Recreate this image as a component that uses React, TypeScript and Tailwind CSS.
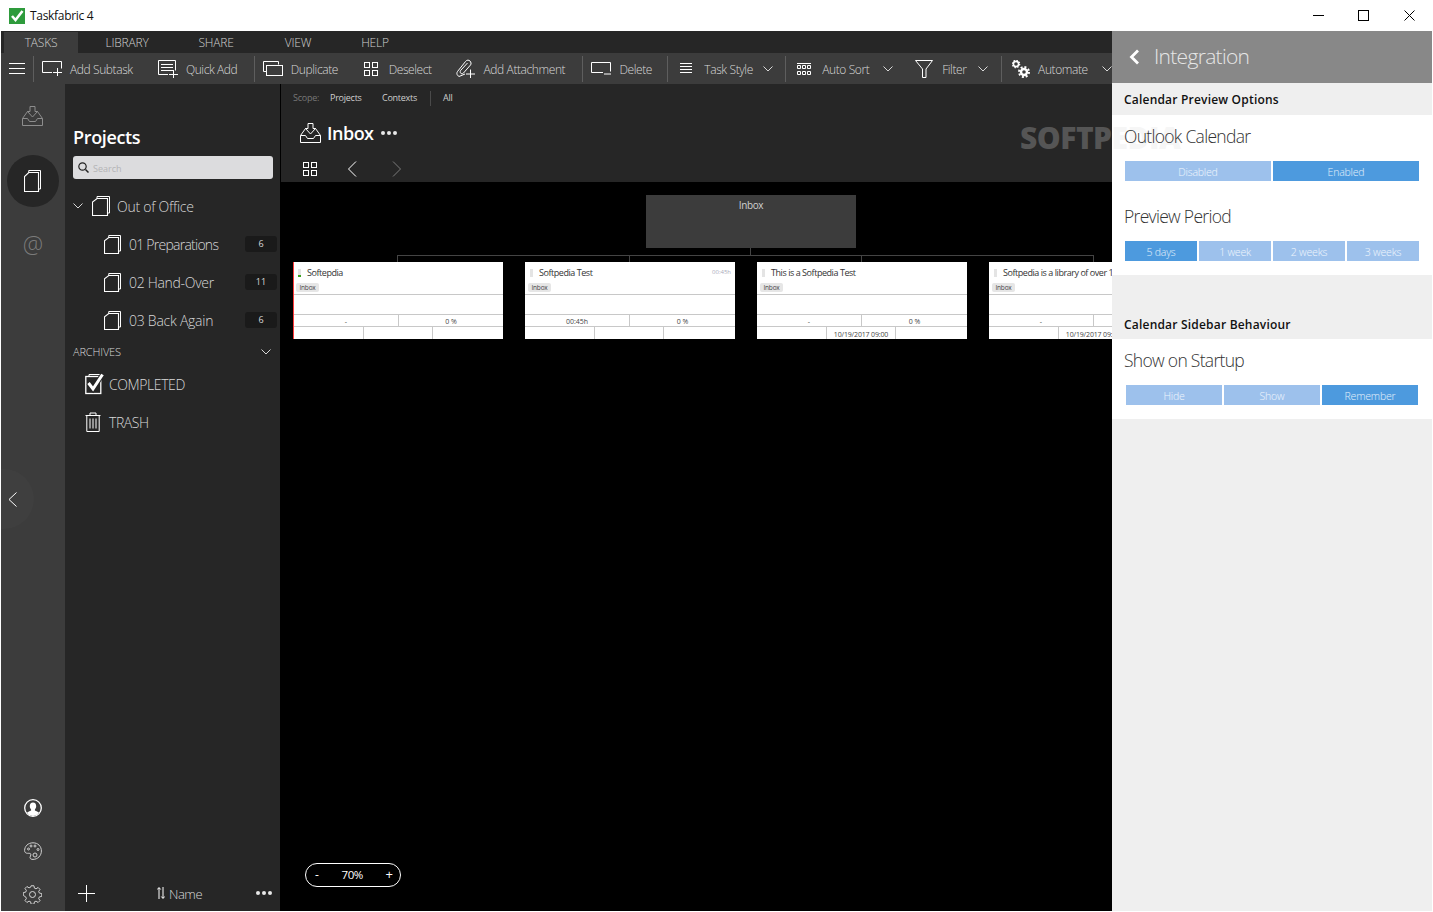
import React from 'react';

const F = "font-['Open_Sans','Noto_Sans',sans-serif]";

function Ic({ w, h, children, className = '' }: { w: number; h: number; children: React.ReactNode; className?: string }) {
  return (
    <svg width={w} height={h} viewBox={`0 0 ${w} ${h}`} fill="none" stroke="currentColor" strokeWidth="1" className={`shrink-0 ${className}`}>
      {children}
    </svg>
  );
}

const Chevron = ({ className = '' }: { className?: string }) => (
  <Ic w={10} h={6} className={className}><path d="M.5.5 5 5 9.5.5" /></Ic>
);

const Doc = ({ w = 18, h = 20, className = '' }: { w?: number; h?: number; className?: string }) => (
  <Ic w={w} h={h} className={className}>
    <path d={`M${w * 0.28} 2.5V.5H${w - 0.5}V${h - 3}H${w - 2.5}`} />
    <path d={`M${w * 0.28} 2.5H${w - 2.5}V${h - 0.5}H.5V${h * 0.3}Z`} strokeWidth="1.1" />
  </Ic>
);

const InboxIcon = ({ className = '' }: { className?: string }) => (
  <Ic w={21} h={20} className={className}>
    <path d="M7.500 5.500h-2L.5 12.500v7h20v-7l-5-7h-2" />
    <path d="M.5 12.500h5l2 3h6l2-3h5" />
    <path d="M8 .5h5v5h2.500l-5 5.500-5-5.500H8Z" />
  </Ic>
);

const Grid4 = () => (
  <Ic w={14} h={14}>
    <rect x=".5" y=".5" width="5" height="5" /><rect x="8.500" y=".5" width="5" height="5" />
    <rect x=".5" y="8.500" width="5" height="5" /><rect x="8.500" y="8.500" width="5" height="5" />
  </Ic>
);

const Sep = ({ ml, mr }: { ml: string; mr: string }) => <div className={`w-px h-[26px] bg-[#5e5e5e] shrink-0 ${ml} ${mr}`} />;

function ToolText({ children, className = '' }: { children: React.ReactNode; className?: string }) {
  return <span className={`pt-[2px] text-[12px] font-light text-[#d8d8d8] tracking-[-0.4px] whitespace-nowrap ${className}`}>{children}</span>;
}

function Toolbar() {
  return (
    <div className="h-[31px] bg-[#3c3c3c] flex items-center pl-2 text-white overflow-hidden">
      <Ic w={16} h={11} className="mr-2">
        <path d="M0 .5h16M0 5.500h16M0 10.500h16" />
      </Ic>
      <Sep ml="" mr="mr-2" />
      <Ic w={20} h={15} className="mr-2">
        <path d="M10 11.500H.5V.5h19v7" /><path d="M11 11.500h9M15.500 7v8" />
      </Ic>
      <ToolText className="w-[88px]">Add Subtask</ToolText>
      <Ic w={20} h={18} className="mr-2">
        <path d="M10 14.500H.5V.5h17v10" /><path d="M3 4.500h12M3 7.500h12M3 10.500h12" /><path d="M11 14.500h9M15.500 10v8" />
      </Ic>
      <ToolText className="w-[68px]">Quick Add</ToolText>
      <Sep ml="" mr="mr-2" />
      <Ic w={20} h={15} className="mr-2">
        <path d="M3.500 10.500H.5V.5h15v3" /><rect x="3.500" y="4.500" width="16" height="10" />
      </Ic>
      <ToolText className="w-[73px]">Duplicate</ToolText>
      <div className="mr-[11px]"><Grid4 /></div>
      <ToolText className="w-[67px]">Deselect</ToolText>
      <Ic w={19} h={19} className="mr-[9px]">
        <path d="M9 15 3 17.500C.5 16 .5 14 1.500 12.500L9.500 2.500C11 .5 13 1 14 2s1.500 3 .5 4L7.500 14C6.500 15 5 15 4.500 14s-.5-2 .5-3L11.500 4" />
        <path d="M10 15h9M14.500 10.500v8.500" />
      </Ic>
      <ToolText className="w-[99px]">Add Attachment</ToolText>
      <Sep ml="" mr="mr-2" />
      <Ic w={20} h={13} className="mr-2">
        <path d="M12 10.500H.5V.5h19v9" /><path d="M13 12h7" />
      </Ic>
      <ToolText className="w-[48px]">Delete</ToolText>
      <Sep ml="" mr="mr-3" />
      <Ic w={12} h={11} className="mr-3">
        <path d="M0 .5h12M0 3.500h12M0 6.500h12M0 9.500h12" />
      </Ic>
      <ToolText className="w-[59px]">Task Style</ToolText>
      <Chevron className="mr-3 text-[#d8d8d8]" />
      <Sep ml="" mr="mr-[11px]" />
      <Ic w={14} h={12} className="mr-[11px]">
        <path d="M0 .5h14M.5 2.500h3v3h-3zM5.500 2.500h3v3h-3zM10.500 2.500h3v3h-3zM.5 8.500h3v3h-3zM5.500 8.500h3v3h-3zM10.500 8.500h3v3h-3z" />
      </Ic>
      <ToolText className="w-[61px]">Auto Sort</ToolText>
      <Chevron className="mr-[22px] text-[#d8d8d8]" />
      <Ic w={18} h={18} className="mr-[9px]">
        <path d="M.5.500h17L11 9v8.500H7.500V9Z" />
      </Ic>
      <ToolText className="w-[36px]">Filter</ToolText>
      <Chevron className="mr-[13px] text-[#d8d8d8]" />
      <Sep ml="" mr="mr-[10px]" />
      <Ic w={18} h={18} className="mr-2">
        <circle cx="4" cy="4" r="2.600" stroke="#fff" strokeWidth="1.600" />
        <circle cx="4" cy="4" r="3.700" stroke="#fff" strokeDasharray="1.400 1.500" strokeWidth="1.200" />
        <circle cx="12" cy="12" r="3" stroke="#fff" strokeWidth="2.400" />
        <circle cx="12" cy="12" r="5" stroke="#fff" strokeDasharray="2 1.900" strokeWidth="2" />
      </Ic>
      <ToolText className="w-[64px]">Automate</ToolText>
      <Chevron className="text-[#d8d8d8]" />
    </div>
  );
}

function MenuBar() {
  const items: [string, string][] = [
    ['TASKS', 'w-[74px] ml-[3px] bg-[#3c3c3c]'],
    ['LIBRARY', 'w-[98px]'],
    ['SHARE', 'w-[80px]'],
    ['VIEW', 'w-[84px]'],
    ['HELP', 'w-[70px]'],
  ];
  return (
    <div className="h-[22px] bg-[#262626] flex items-end">
      {items.map(([t, c]) => (
        <div key={t} className={`h-[21px] flex items-center justify-center text-[12px] font-light text-[#d0d0d0] tracking-[-0.2px] ${c}`}>{t}</div>
      ))}
    </div>
  );
}

function RailBtn({ children, className = '' }: { children: React.ReactNode; className?: string }) {
  return <div className={`flex justify-center ${className}`}>{children}</div>;
}

function Rail() {
  return (
    <div className="w-[64px] bg-[#3c3c3c] flex flex-col shrink-0 relative">
      <RailBtn className="pt-[22px] pr-px text-[#8d8d8d]"><InboxIcon /></RailBtn>
      <div className="mt-[29px] ml-[6px] w-[52px] h-[52px] rounded-full bg-[#262626] flex items-center justify-center pr-px text-white">
        <Doc w={17} h={22} />
      </div>
      <RailBtn className="mt-[25px] text-[#7b7b7b]">
        <span className="text-[23px] leading-[24px] font-light">@</span>
      </RailBtn>
      <div className="absolute left-0 top-[385px] w-[33px] h-[60px] rounded-r-[30px] bg-[#3f3f3f] flex items-center pl-[7px] text-white">
        <Ic w={9} h={15}><path d="M8.500.5 1 7.500l7.500 7" /></Ic>
      </div>
      <div className="mt-auto flex flex-col items-center pb-[7px] text-[#e8e8e8]">
        <svg width="18" height="18" viewBox="0 0 18 18" className="mb-[25px]">
          <circle cx="9" cy="9" r="8.300" fill="none" stroke="#fff" strokeWidth="1.300" />
          <path d="M9 3.500c2.200 0 3.200 1.700 3.200 3.700 0 1.300-.6 2.500-1.300 3.200v1c1.500.7 3 1.300 4.200 2.300A8.200 8.200 0 0 1 9 17a8.200 8.200 0 0 1-6.100-3.300c1.200-1 2.700-1.600 4.200-2.300v-1C6.400 9.700 5.800 8.500 5.800 7.200 5.800 5.200 6.800 3.500 9 3.500Z" fill="#fff" />
        </svg>
        <Ic w={18} h={18} className="mb-[25px] text-[#cfcfcf]">
          <path d="M9 .8C4 .8.600 4.400.600 8.500c0 2 1.400 2.800 2.900 2.800 1.800 0 3.400-.3 3.400 1.500 0 1-.9 1.500-.9 2.600 0 1.500 1.400 2 3 2 4.700 0 8.400-3.700 8.400-8.400S14 .8 9 .8Z" />
          <circle cx="4.500" cy="7" r="1" /><circle cx="7" cy="4" r="1" /><circle cx="11" cy="4" r="1" /><circle cx="14" cy="7.500" r="1" /><circle cx="11" cy="13" r="2" />
        </Ic>
        <Ic w={19} h={19} className="text-[#d8d8d8] mr-px">
          <circle cx="9.500" cy="9.500" r="3" />
          <path d="M8 .8h3l.5 2.500 1.700.7 2.200-1.400 2 2-1.400 2.200.7 1.700 2.500.5v3l-2.500.5-.7 1.700 1.400 2.200-2 2-2.200-1.400-1.700.7-.5 2.500H8l-.5-2.500-1.700-.7-2.200 1.400-2-2 1.400-2.200-.7-1.700L-.2 11V8l2.500-.5.7-1.700-1.400-2.200 2-2 2.200 1.400 1.700-.7Z" transform="translate(.5 0) scale(.95)" />
        </Ic>
      </div>
    </div>
  );
}

function SubRow({ name, n, tr }: { name: string; n: string; tr: string }) {
  return (
    <div className="h-[38px] flex items-center text-white">
      <Doc w={17} h={19} className="ml-[31px] mr-[8px]" />
      <span className={`text-[14px] font-light text-[#d8d8d8] w-[116px] whitespace-nowrap ${tr}`}>{name}</span>
      <span className="w-[32px] h-[16px] rounded-[3px] bg-[#1a1a1a] text-[9px] text-[#d8d8d8] flex items-center justify-center">{n}</span>
    </div>
  );
}

function Sidebar() {
  return (
    <div className="w-[215px] bg-[#262626] flex flex-col shrink-0 pl-[8px] relative">
      <div className="mt-[41px] text-[18px] leading-[24px] font-semibold text-white tracking-[-0.35px]">Projects</div>
      <div className="mt-[7px] w-[200px] h-[23px] rounded-[3px] bg-[#dcdcde] flex items-center pl-[5px]">
        <Ic w={11} h={11} className="text-[#222] mr-[4px]">
          <circle cx="4.500" cy="4.500" r="3.700" strokeWidth="1.200" /><path d="m7.500 7.500 3 3" strokeWidth="1.500" />
        </Ic>
        <span className="pt-[2px] text-[9px] text-[#b4b4b6]">Search</span>
      </div>
      <div className="mt-[8px] h-[38px] flex items-center text-white">
        <Chevron className="mr-[9px] text-[#d8d8d8]" />
        <Doc w={18} h={20} className="mr-[7px]" />
        <span className="text-[14px] font-light text-[#d8d8d8] tracking-[-0.25px] whitespace-nowrap">Out of Office</span>
      </div>
      <SubRow name="01 Preparations" n="6" tr="tracking-[-0.75px]" />
      <SubRow name="02 Hand-Over" n="11" tr="tracking-[-0.3px]" />
      <SubRow name="03 Back Again" n="6" tr="tracking-[-0.25px]" />
      <div className="mt-[3px] h-[20px] flex items-center justify-between pr-[9px]">
        <span className="text-[11px] font-light text-[#d8d8d8] tracking-[-0.15px]">ARCHIVES</span>
        <Chevron className="text-[#d8d8d8]" />
      </div>
      <div className="mt-[3px] h-[38px] flex items-center text-white pl-[12px]">
        <Ic w={20} h={22} className="mr-[4px]">
          <path d="M4 3V1.500h11V3" />
          <rect x=".8" y="3.500" width="15" height="17" strokeWidth="1.300" />
          <path d="m3.500 10 4.500 6 9.500-14.500" strokeWidth="5" stroke="#262626" />
          <path d="m3.500 10 4.500 6 9.500-14.500" strokeWidth="3" />
        </Ic>
        <span className="text-[14px] font-light text-[#d8d8d8] tracking-[-0.4px]">COMPLETED</span>
      </div>
      <div className="h-[38px] flex items-center text-white pl-[12px]">
        <Ic w={16} h={20} className="mr-[8px]">
          <path d="M.5 3.500h15M5 3.500v-2.500h6v2.500M1.800 3.500v16h12.400v-16M5 6.500v10M8 6.500v10M11 6.500v10" />
        </Ic>
        <span className="text-[14px] font-light text-[#d8d8d8] tracking-[-0.4px]">TRASH</span>
      </div>
      <div className="mt-auto pb-[7px] flex items-center text-white">
        <Ic w={17} h={17} className="ml-[5px] mr-[61px]">
          <path d="M8.500 0v17M0 8.500h17" />
        </Ic>
        <Ic w={8} h={12} className="ml-px mr-[4px]">
          <path d="M2 12V1M.3 2.500 2 .5l1.700 2M6 0v11M4.300 9.500 6 11.500l1.700-2" />
        </Ic>
        <span className="pt-[2px] text-[13px] font-light text-[#d8d8d8] tracking-[-0.45px] w-[87px]">Name</span>
        <span className="flex gap-[2px]">
          <i className="w-[4px] h-[4px] rounded-full bg-[#e8e8e8]" />
          <i className="w-[4px] h-[4px] rounded-full bg-[#e8e8e8]" />
          <i className="w-[4px] h-[4px] rounded-full bg-[#e8e8e8]" />
        </span>
      </div>
    </div>
  );
}

function ContentHeader() {
  return (
    <div className="h-[98px] bg-[#262626] shrink-0 relative text-white">
      <div className="h-[28px] flex items-center pl-[12px] text-[9px] tracking-[-0.25px]">
        <span className="text-[#777] w-[37px]">Scope:</span>
        <span className="text-[#cfcfcf] w-[52px]">Projects</span>
        <span className="text-[#cfcfcf] w-[48px]">Contexts</span>
        <span className="w-px h-[15px] bg-[#4a4a4a] mr-[12px]" />
        <span className="text-[#cfcfcf]">All</span>
      </div>
      <div className="flex items-center pl-[19px] mt-[9px] h-[24px]">
        <InboxIcon className="mr-[6px]" />
        <span className="text-[18px] font-semibold leading-[24px] tracking-[-0.5px] w-[54px]">Inbox</span>
        <span className="flex gap-[2px]">
          <i className="w-[4px] h-[4px] rounded-full bg-[#e8e8e8]" />
          <i className="w-[4px] h-[4px] rounded-full bg-[#e8e8e8]" />
          <i className="w-[4px] h-[4px] rounded-full bg-[#e8e8e8]" />
        </span>
      </div>
      <div className="flex items-center pl-[22px] mt-[16px] h-[16px]">
        <Grid4 />
        <Ic w={10} h={16} className="ml-[30px] mr-[35px]"><path d="M9 .5 1.500 8 9 15.500" /></Ic>
        <Ic w={10} h={16} className="text-[#7a7a7a]"><path d="M1 .5 8.500 8 1 15.500" /></Ic>
      </div>
    </div>
  );
}

type Card = { title: string; time?: string; a: string; b: string; date?: string; red?: boolean; green?: boolean };

function TaskCard({ c }: { c: Card }) {
  return (
    <div className="shrink-0 w-[210px]">
      <div className="w-px h-[6px] bg-[#444] ml-[104px]" />
      <div className={`h-[77px] bg-white flex flex-col overflow-hidden text-[#333] ${c.red ? 'border-l border-[#ff3b3b]' : ''}`}>
        <div className="h-[33px] border-b border-[#c8c8c8] relative shrink-0">
          <div className={`flex items-center h-[22px] ${c.red ? 'pl-[4px]' : 'pl-[5px]'}`}>
            <span className="w-[3px] h-[8px] bg-[#e4e4e4] relative mr-[6px] shrink-0">
              {c.green && <i className="absolute bottom-0 left-0 w-[3px] h-[2px] bg-[#3aa31c]" />}
            </span>
            <span className="text-[9px] whitespace-nowrap tracking-[-0.45px]">{c.title}</span>
          </div>
          {c.time && <span className="absolute right-[4px] top-[6px] text-[6px] text-[#aab]">{c.time}</span>}
          <span className={`absolute top-[21px] ${c.red ? 'left-[2px]' : 'left-[3px]'} w-[23px] h-[9px] rounded-[2px] bg-[#e6e6e6] text-[6.500px] leading-[9px] text-center text-[#444] tracking-[-0.2px]`}>Inbox</span>
        </div>
        <div className="h-[20px] border-b border-[#c8c8c8] shrink-0" />
        <div className="h-[12px] border-b border-[#c8c8c8] flex shrink-0 text-[7px] leading-[14px] text-center text-[#444] overflow-hidden">
          <span className="w-[105px] border-r border-[#c8c8c8]">{c.a}</span>
          <span className="flex-1">{c.b}</span>
        </div>
        <div className="flex-1 min-h-0 flex text-[7px] leading-[15px] text-center text-[#444] tracking-[-0.15px]">
          <span className="w-[70px] border-r border-[#c8c8c8]" />
          <span className="w-[69px] border-r border-[#c8c8c8] whitespace-nowrap">{c.date}</span>
          <span className="flex-1" />
        </div>
      </div>
    </div>
  );
}

const cards: Card[] = [
  { title: 'Softepdia', a: '-', b: '0 %', red: true, green: true },
  { title: 'Softpedia Test', time: '00:45h', a: '00:45h', b: '0 %' },
  { title: 'This is a Softpedia Test', a: '-', b: '0 %', date: '10/19/2017 09:00' },
  { title: 'Softpedia is a library of over 1', a: '-', b: '0 %', date: '10/19/2017 09:00' },
];

function Canvas() {
  return (
    <div className="flex-1 bg-black relative overflow-hidden pt-[13px]">
      <div className="ml-[365px] w-[210px] h-[53px] bg-[#3c3c3c] text-center text-[10px] leading-[20px] text-[#d0d0d0] tracking-[-0.4px]">Inbox</div>
      <div className="ml-[469px] w-px h-[7px] bg-[#444]" />
      <div className="ml-[116px] w-[697px] h-px bg-[#444]" />
      <div className="flex gap-[22px] pl-[12px]">
        {cards.map((c) => <TaskCard key={c.title} c={c} />)}
      </div>
      <div className="absolute left-[24px] bottom-[24px] w-[96px] h-[24px] rounded-full border border-white flex items-center justify-between pl-[9px] pr-[7px] text-white text-[12px]">
        <span>-</span>
        <span className="text-[11.500px] tracking-[-0.4px]">70%</span>
        <span className="text-[13px]">+</span>
      </div>
    </div>
  );
}

function Seg({ items, active, cls }: { items: string[]; active: number; cls: string }) {
  return (
    <div className={`flex gap-[2px] ${cls}`}>
      {items.map((t, i) => (
        <div key={t} className={`flex-1 h-[20px] pt-[3px] flex items-center justify-center text-[10.500px] font-light text-white/85 tracking-[-0.2px] ${i === active ? 'bg-[#4d9ade]' : 'bg-[#9dc1ec]'}`}>{t}</div>
      ))}
    </div>
  );
}

const SecHead = ({ children }: { children: React.ReactNode }) => (
  <div className="text-[12px] font-semibold leading-[16px] text-[#111] pl-[12px] tracking-[0.2px]">{children}</div>
);
const Label = ({ children }: { children: React.ReactNode }) => (
  <div className="relative z-10 text-[17.500px] font-light leading-[24px] text-[#333] pl-[12px] tracking-[-0.7px]">{children}</div>
);

function RightPanel() {
  return (
    <div className="w-[320px] shrink-0 bg-[#efefef] flex flex-col relative overflow-hidden">
      <div className="h-[52px] bg-[#888888] flex items-center pl-[17px] shrink-0">
        <Ic w={11} h={16} className="text-white mr-[14px]"><path d="M9 1.500 2.500 8 9 14.500" strokeWidth="2.800" /></Ic>
        <span className="text-[21px] font-light text-[#e6e6e6] tracking-[-0.7px]">Integration</span>
      </div>
      <div className="h-[32px] pt-[2px] flex items-center shrink-0"><SecHead>Calendar Preview Options</SecHead></div>
      <div className="bg-white h-[160px] shrink-0 pt-[9px]">
        <Label>Outlook Calendar</Label>
        <Seg items={['Disabled', 'Enabled']} active={1} cls="mt-[13px] ml-[13px] mr-[13px]" />
        <div className="mt-[23px]"><Label>Preview Period</Label></div>
        <Seg items={['5 days', '1 week', '2 weeks', '3 weeks']} active={0} cls="mt-[13px] ml-[13px] mr-[13px]" />
      </div>
      <div className="h-[64px] flex items-end pb-[6px] shrink-0"><SecHead>Calendar Sidebar Behaviour</SecHead></div>
      <div className="bg-white h-[80px] shrink-0 pt-[9px]">
        <Label>Show on Startup</Label>
        <Seg items={['Hide', 'Show', 'Remember']} active={2} cls="mt-[13px] ml-[14px] mr-[14px]" />
      </div>
      <div className="absolute left-[-92px] top-[89px] text-[30px] font-extrabold text-[#f6f6f6] leading-[36px] tracking-[-0.5px] whitespace-nowrap pointer-events-none">SOFTPEDIA</div>
    </div>
  );
}

export default function App() {
  return (
    <div className={`w-[1433px] h-[912px] bg-white flex flex-col overflow-hidden ${F}`}>
      <div className="h-[31px] flex items-center shrink-0 relative">
        <svg width="16" height="16" viewBox="0 0 16 16" className="ml-[9px] mr-[5px]">
          <rect width="16" height="16" fill="#2e9b3c" />
          <path d="m3 8 3.500 4L13.500 3" stroke="#fff" strokeWidth="2.600" fill="none" />
        </svg>
        <span className="text-[12px] text-[#111] tracking-[-0.3px]">Taskfabric 4</span>
        <div className="ml-auto flex items-center text-black">
          <Ic w={11} h={11} className="mr-[34px]"><path d="M0 5.500h11" /></Ic>
          <Ic w={11} h={11} className="mr-[35px]"><rect x=".5" y=".5" width="10" height="10" /></Ic>
          <Ic w={11} h={11} className="mr-[18px]"><path d="m.5.500 10 10M10.500.500l-10 10" /></Ic>
        </div>
      </div>
      <div className="flex-1 flex pl-px pr-px pb-px min-h-0">
        <div className="w-[1111px] shrink-0 flex flex-col relative overflow-hidden">
          <MenuBar />
          <Toolbar />
          <div className="flex-1 flex min-h-0">
            <Rail />
            <Sidebar />
            <div className="flex-1 min-w-0 flex flex-col border-l border-black">
              <ContentHeader />
              <Canvas />
            </div>
          </div>
          <div className="absolute left-[1019px] top-[89px] text-[30px] font-extrabold text-[#555] leading-[36px] tracking-[-0.5px] whitespace-nowrap pointer-events-none">SOFTPEDIA</div>
        </div>
        <RightPanel />
      </div>
    </div>
  );
}
